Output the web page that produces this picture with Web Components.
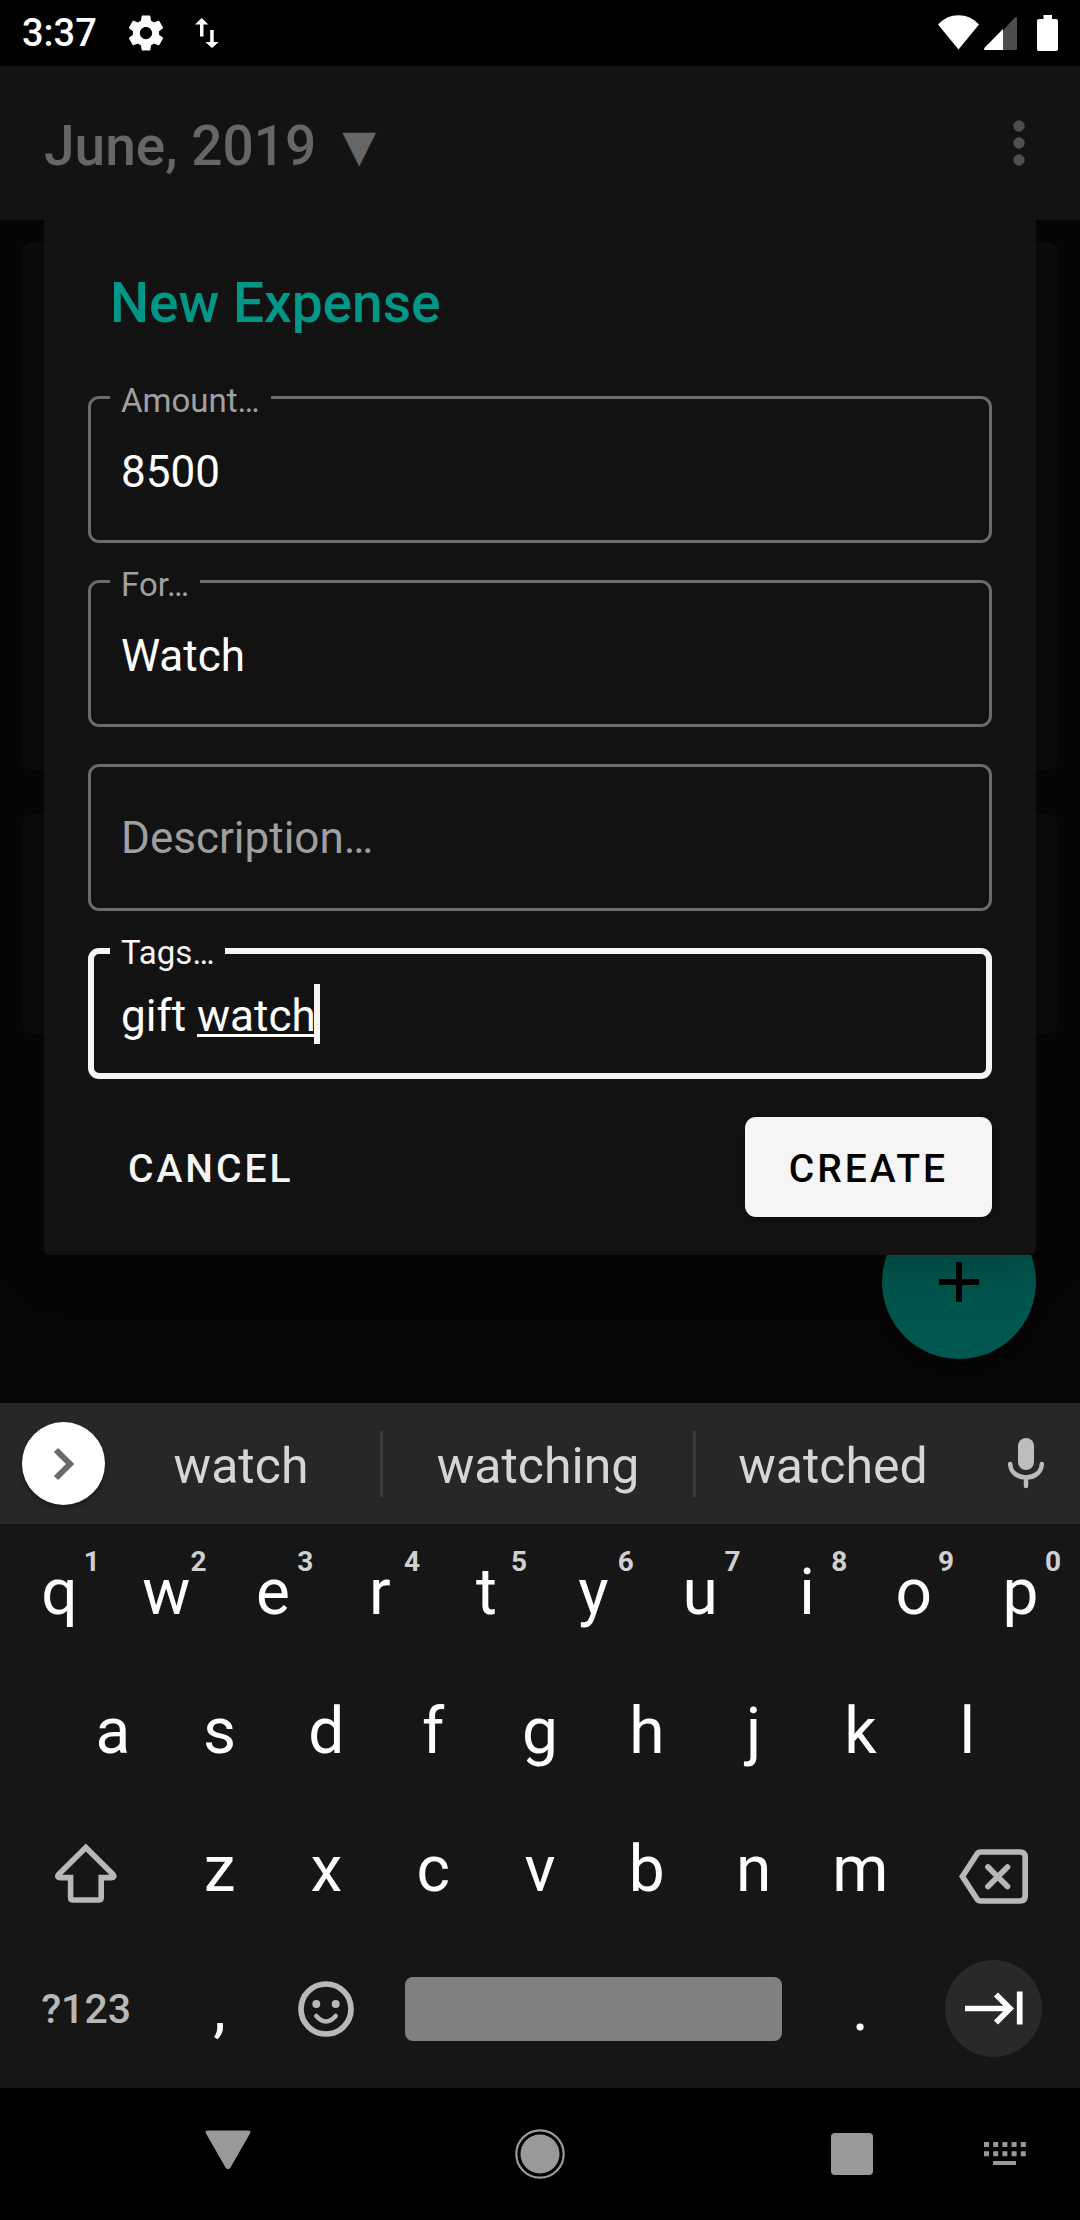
<!DOCTYPE html>
<html lang="en">
<head>
<meta charset="utf-8">
<meta name="viewport" content="width=device-width, initial-scale=1">
<title>New Expense</title>
<style>
  html, body { margin: 0; height: 100%; background: #000; }
  body { font-family: Roboto, "Noto Sans", sans-serif; color: #fff; }
</style>
</head>
<body>
<expense-app></expense-app>

<script>
const define = (name, html, setup) => {
  const template = document.createElement('template');
  template.innerHTML = html;
  customElements.define(name, class extends HTMLElement {
    constructor() {
      super();
      this.attachShadow({ mode: 'open' }).append(template.content.cloneNode(true));
    }
    connectedCallback() {
      if (setup) setup(this, this.shadowRoot);
    }
  });
};

const reset = `
  *, *::before, *::after { box-sizing: border-box; }
  svg { display: block; flex: none; }
  button { margin: 0; padding: 0; border: 0; background: none; color: inherit; font: inherit; display: flex; align-items: center; justify-content: center; }
`;

/* Clock, notification icons, signal and battery */
define('status-bar', `
  <style>${reset}
    :host { display: flex; align-items: center; gap: 28px; height: 66px; padding: 0 22px; background: #000; flex: none; }
    time { font-size: 38px; font-weight: 500; line-height: 44px; }
    .system { display: flex; margin-left: auto; }
    .battery { margin-left: 20px; }
    .signal { margin-left: 5px; }
  </style>
  <time>3:37</time>
  <svg width="42" height="42" viewBox="0 0 24 24" fill="#fff"><path d="M19.43 12.98c.04-.32.07-.64.07-.98s-.03-.66-.07-.98l2.11-1.65c.19-.15.24-.42.12-.64l-2-3.46c-.12-.22-.39-.3-.61-.22l-2.49 1c-.52-.4-1.08-.73-1.69-.98l-.38-2.65C14.46 2.18 14.25 2 14 2h-4c-.25 0-.46.18-.49.42l-.38 2.65c-.61.25-1.17.59-1.69.98l-2.49-1c-.23-.09-.49 0-.61.22l-2 3.46c-.13.22-.07.49.12.64l2.11 1.65c-.04.32-.07.65-.07.98s.03.66.07.98l-2.11 1.65c-.19.15-.24.42-.12.64l2 3.46c.12.22.39.3.61.22l2.49-1c.52.4 1.08.73 1.69.98l.38 2.65c.03.24.24.42.49.42h4c.25 0 .46-.18.49-.42l.38-2.65c.61-.25 1.17-.59 1.69-.98l2.49 1c.23.09.49 0 .61-.22l2-3.46c.12-.22.07-.49-.12-.64l-2.11-1.65zM12 15.500c-1.930 0-3.500-1.570-3.500-3.500s1.570-3.500 3.500-3.500 3.500 1.570 3.500 3.500-1.570 3.500-3.500 3.500z"/></svg>
  <svg width="24" height="30" viewBox="0 0 24 30" fill="#fff"><path d="M6.700 0 13.400 6.500H8.500V18.500H5V6.500H0ZM17 30 10.300 24H15.200V12H18.700V24H23.700Z"/></svg>
  <div class="system">
    <svg width="41" height="36" viewBox="0 0 41 36" fill="#fff"><path d="M20.500 34.500 0 9.500C11-3 30-3 41 9.500Z"/></svg>
    <svg class="signal" width="33" height="36" viewBox="0 0 33 36"><path fill="#4d4d4d" d="M19 15.500 30.500 2.700Q33 1 33 3.500V33.500Q33 35 31.500 35H19Z"/><path fill="#fff" d="M19 14V35H1.500Q-.8 35 .5 32.800Z"/></svg>
    <svg class="battery" width="21" height="36" viewBox="0 0 21 36" fill="#fff"><path d="M6.500 0H15V4H19Q21 4 21 6V34Q21 36 19 36H2Q0 36 0 34V6Q0 4 2 4H6.500Z"/></svg>
  </div>
`);

/* Month picker and overflow menu */
define('app-bar', `
  <style>${reset}
    :host { display: flex; align-items: center; justify-content: space-between; height: 154px; padding: 0 44px; background: #131313; color: #666; flex: none; }
    .month { font-size: 55px; font-weight: 500; line-height: 64px; gap: 26px; padding-top: 6px; }
    .caret { font-family: "DejaVu Sans", sans-serif; font-weight: 400; font-size: 44px; }
    .menu { width: 34px; }
  </style>
  <button class="month"><slot></slot><span class="caret">▼</span></button>
  <button class="menu" aria-label="More options"><svg width="12" height="46" viewBox="0 0 12 46" fill="#4e4e4e"><circle cx="6" cy="6" r="5.700"/><circle cx="6" cy="23" r="5.700"/><circle cx="6" cy="40" r="5.700"/></svg></button>
`);

/* Dimmed card of the list behind the dialog */
define('expense-card', `
  <style>
    :host { display: block; min-height: 220px; border-radius: 11px; background: #0c0c0c; }
    :host([size="large"]) { min-height: 528px; }
  </style>
  <slot></slot>
`);

define('fab-button', `
  <style>${reset}
    :host { display: block; }
    button { width: 154px; height: 154px; border-radius: 50%; background: #00574f; box-shadow: 0 6px 14px rgba(0,0,0,.4); }
  </style>
  <button aria-label="Add expense"><svg width="40" height="40" viewBox="0 0 40 40" stroke="#000" stroke-width="6"><path d="M20 0V40M0 20H40"/></svg></button>
`);

/* Outlined text field; the label sits in the border when floated */
define('text-field', `
  <style>${reset}
    :host { display: block; position: relative; }
    .box { display: flex; align-items: center; height: 147px; padding: 0 30px; border: 3px solid #6b6b6b; border-radius: 11px; }
    input { min-width: 0; width: 100%; height: 60px; margin: 0; padding: 0; border: 0; outline: 0; background: none; color: #fff; font: inherit; font-size: 44px; }
    input::placeholder { color: #9f9f9f; opacity: 1; }
    label { position: absolute; left: 22px; top: -14px; padding: 0 11px; background: #121212; color: #a0a0a0; font-size: 33px; line-height: 38px; }
    label:empty { display: none; }
    .entry { position: relative; display: flex; align-items: center; flex: 1; }
    :host([label]) .entry { padding-top: 5px; }
    .composing, .cursor { display: none; }
    :host([active]) .box { height: 131px; padding: 0 27px; border: 6px solid #f5f5f5; }
    :host([active]) label { color: #f5f5f5; }
    :host([active]) .entry { flex: none; }
    :host([active]) input { field-sizing: content; width: auto; caret-color: transparent; }
    :host([active]) .composing { display: block; position: absolute; right: 6px; bottom: 9px; width: 117px; height: 3px; background: #fff; }
    :host([active]) .cursor { display: block; width: 6px; height: 60px; margin: -4px 0 0 -2px; background: #f5f5f5; }
  </style>
  <div class="box"><div class="entry"><input id="field" type="text"><i class="composing"></i><i class="cursor"></i></div></div>
  <label for="field"></label>
`, (host, root) => {
  const input = root.querySelector('input');
  input.value = host.getAttribute('value') || '';
  const hint = host.getAttribute('placeholder');
  if (hint) { input.placeholder = hint; input.setAttribute('aria-label', hint); }
  root.querySelector('label').textContent = host.getAttribute('label') || '';
});

define('dialog-button', `
  <style>${reset}
    :host { display: block; }
    button { height: 100px; padding: 3px 40px 0; border-radius: 11px; color: #f5f5f5; font-size: 39px; font-weight: 500; letter-spacing: 3px; text-transform: uppercase; }
    :host([filled]) button { padding: 3px 44px 0; background: #f5f5f5; color: #000; box-shadow: 0 3px 6px rgba(0,0,0,.3); }
  </style>
  <button><slot></slot></button>
`);

define('expense-dialog', `
  <style>${reset}
    :host { display: block; padding: 58px 44px 38px; border-radius: 6px; background: #121212; box-shadow: 0 14px 50px rgba(0,0,0,.25); }
    h2 { margin: 0 22px 61px; color: #009688; font-size: 55px; font-weight: 500; line-height: 64px; }
    form { display: flex; flex-direction: column; gap: 37px; }
    .actions { display: flex; justify-content: space-between; padding-top: 1px; }
  </style>
  <h2>New Expense</h2>
  <form onsubmit="return false">
    <text-field label="Amount…" value="8500"></text-field>
    <text-field label="For…" value="Watch"></text-field>
    <text-field placeholder="Description…"></text-field>
    <text-field label="Tags…" value="gift watch" active></text-field>
    <div class="actions">
      <dialog-button>CANCEL</dialog-button>
      <dialog-button filled>CREATE</dialog-button>
    </div>
  </form>
`);

/* Word suggestions above the keys */
define('suggestion-bar', `
  <style>${reset}
    :host { display: grid; grid-template-columns: 102px 281fr 313fr 274fr 110px; align-items: center; height: 121px; background: #272727; color: #d6d6d6; }
    .expand { width: 83px; height: 83px; margin-left: 22px; border-radius: 50%; background: #fff; box-shadow: 0 3px 4px rgba(0,0,0,.35); }
    .word { height: 66px; padding-top: 5px; font-size: 50px; line-height: 60px; border-right: 3px solid #3a3a3a; }
    .word.last { border-right: 0; }
    .mic { padding-left: 2px; }
  </style>
  <button class="expand" aria-label="Expand toolbar"><svg width="22" height="36" viewBox="0 0 22 36" fill="none" stroke="#6a6a6a" stroke-width="6"><path d="M3 4 17 18 3 32"/></svg></button>
  <button class="word">watch</button>
  <button class="word">watching</button>
  <button class="word last">watched</button>
  <button class="mic" aria-label="Voice input"><svg width="36" height="51" viewBox="0 0 36 51"><rect x="10" width="16" height="32" rx="8" fill="#bdbdbd"/><path d="M2.200 26C3 44 33 44 33.800 26M18 40V48" fill="none" stroke="#bdbdbd" stroke-width="4.500" stroke-linecap="round"/></svg></button>
`);

/* One key; span is its width in half letter keys */
define('key-cap', `
  <style>${reset}
    :host { display: flex; position: relative; min-width: 0; }
    button { flex: 1; min-width: 0; font-size: 64px; line-height: 76px; }
    :host([kind="mode"]) button { font-size: 41px; font-weight: 500; color: #b8b8b8; }
    :host([kind="space"]) button { align-self: center; height: 64px; margin: 0 25px; border-radius: 8px; background: #808080; }
    :host([kind="enter"]) button { flex: none; align-self: center; width: 97px; height: 97px; margin: 0 auto; border-radius: 50%; background: #292929; }
    sup { position: absolute; top: 24px; right: 13px; color: #d0d0d0; font-size: 28px; font-weight: 700; line-height: 28px; pointer-events: none; }
    sup:empty { display: none; }
  </style>
  <button><slot></slot></button><sup></sup>
`, (host, root) => {
  host.style.flex = (host.getAttribute('span') || 2) + ' 1 0';
  root.querySelector('sup').textContent = host.getAttribute('hint') || '';
  const name = host.getAttribute('name');
  if (name) root.querySelector('button').setAttribute('aria-label', name);
});

const letters = (text, hints = '') =>
  [...text].map((c, i) => `<key-cap${hints ? ` hint="${hints[i]}"` : ''}>${c}</key-cap>`).join('');

define('soft-keyboard', `
  <style>${reset}
    :host { display: block; background: #161616; flex: none; }
    .rows { display: flex; flex-direction: column; height: 564px; padding: 0 6px 10px; }
    .row { display: flex; flex: 1; }
    .row.inset::before, .row.inset::after { content: ""; flex: 1 1 0; }
  </style>
  <suggestion-bar></suggestion-bar>
  <div class="rows">
    <div class="row">${letters('qwertyuiop', '1234567890')}</div>
    <div class="row inset">${letters('asdfghjkl')}</div>
    <div class="row">
      <key-cap span="3" name="Shift"><svg width="62" height="66" viewBox="0 0 62 66" fill="none" stroke="#b8b8b8" stroke-width="5.600"><path d="M30.800 10.500 3.500 37.500Q1.500 40.600 5 40.600H15.600V60.500Q15.600 63 18 63H43.600Q46.200 63 46.200 60.500V40.600H56.600Q60.100 40.600 58.100 37.500Z"/></svg></key-cap>
      ${letters('zxcvbnm')}
      <key-cap span="3" name="Backspace"><svg width="70" height="68" viewBox="0 0 70 68" fill="none" stroke="#b8b8b8" stroke-width="5.700"><path d="M3.400 40.500 18 18Q19.300 16 22 16H61Q66.200 16 66.200 21V60Q66.200 65 61 65H22Q19.300 65 18 63Z"/><path stroke-linecap="round" d="M29 31 48.500 50.500M48.500 31 29 50.500"/></svg></key-cap>
    </div>
    <div class="row">
      <key-cap span="3" kind="mode">?123</key-cap>
      <key-cap>,</key-cap>
      <key-cap name="Emoji"><svg width="56" height="56" viewBox="-28 -28 56 56" fill="none" stroke="#b8b8b8"><circle r="25" stroke-width="5.700"/><g fill="#b8b8b8" stroke="none"><circle cx="-9.700" cy="-5" r="4"/><circle cx="9.700" cy="-5" r="4"/></g><path stroke-width="4.500" stroke-linecap="round" d="M-9.700 7Q0 18 9.700 7"/></svg></key-cap>
      <key-cap span="8" kind="space" name="Space"></key-cap>
      <key-cap>.</key-cap>
      <key-cap span="3" kind="enter" name="Next field"><svg width="60" height="36" viewBox="-30 -18 60 36" fill="none" stroke="#fff" stroke-width="5.700"><path d="M-29-.5H16M2-14.500 16-.5 2 13.500M25.700-17.500V15.500"/></svg></key-cap>
    </div>
  </div>
`);

define('nav-bar', `
  <style>${reset}
    :host { display: grid; grid-template-columns: 150fr repeat(5, 156fr) 150fr; height: 132px; background: #000; flex: none; }
    .back { grid-column: 2; padding-bottom: 8px; }
    .home { grid-column: 4; }
    .recents { grid-column: 6; }
    .keyboard { grid-column: 7; }
  </style>
  <button class="back" aria-label="Back"><svg width="46" height="40" viewBox="0 0 46 40" fill="#999"><path d="M3 .5H43Q46.500.5 45 3.500L25.500 37.500Q23 41 20.500 37.500L1 3.500Q-.5.5 3 .5Z"/></svg></button>
  <button class="home" aria-label="Home"><svg width="50" height="50" viewBox="-25 -25 50 50"><circle r="19.500" fill="#999"/><circle r="23.700" fill="none" stroke="#999" stroke-width="2.200"/></svg></button>
  <button class="recents" aria-label="Recent apps"><svg width="42" height="42" viewBox="0 0 42 42"><rect width="42" height="42" rx="4" fill="#999"/></svg></button>
  <button class="keyboard" aria-label="Switch keyboard"><svg width="42" height="24" viewBox="0 0 42 24" fill="none" stroke="#999"><path stroke-width="5" stroke-dasharray="5 4.200" d="M0 2.500H42M0 11.700H42"/><path stroke-width="4" d="M9 21H32"/></svg></button>
`);

define('expense-app', `
  <style>
    :host { display: flex; flex-direction: column; min-height: 100%; }
    main { position: relative; flex: 1; background: #060606; }
    .list { display: flex; flex-direction: column; gap: 44px; padding: 22px; }
    fab-button { position: absolute; right: 44px; bottom: 44px; }
    .overlay { position: absolute; inset: 0; display: flex; align-items: center; padding: 0 44px 1px; }
    expense-dialog { flex: 1; }
  </style>
  <status-bar></status-bar>
  <main>
    <app-bar>June, 2019</app-bar>
    <div class="list">
      <expense-card size="large"></expense-card>
      <expense-card></expense-card>
    </div>
    <fab-button></fab-button>
    <div class="overlay"><expense-dialog role="dialog" aria-label="New Expense"></expense-dialog></div>
  </main>
  <soft-keyboard></soft-keyboard>
  <nav-bar></nav-bar>
`);
</script>
</body>
</html>
